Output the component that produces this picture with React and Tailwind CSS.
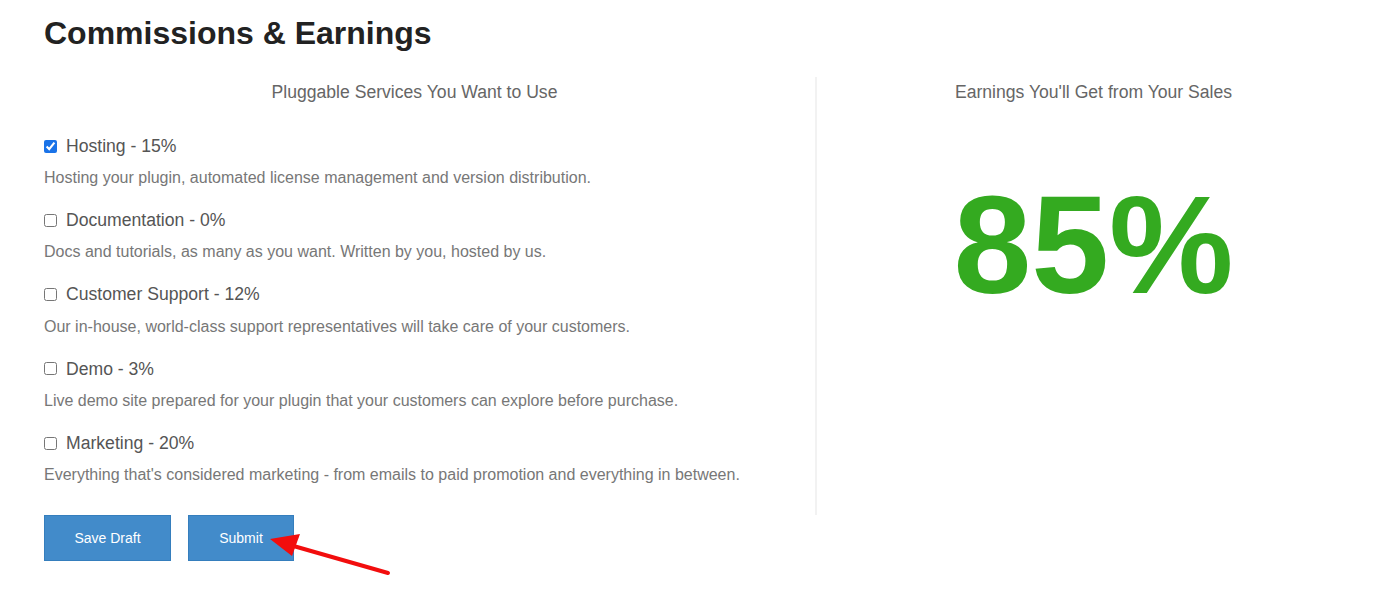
import React from 'react';

const services = [
  { name: 'Hosting - 15%', desc: 'Hosting your plugin, automated license management and version distribution.', checked: true },
  { name: 'Documentation - 0%', desc: 'Docs and tutorials, as many as you want. Written by you, hosted by us.' },
  { name: 'Customer Support - 12%', desc: 'Our in-house, world-class support representatives will take care of your customers.' },
  { name: 'Demo - 3%', desc: 'Live demo site prepared for your plugin that your customers can explore before purchase.' },
  { name: 'Marketing - 20%', desc: "Everything that's considered marketing - from emails to paid promotion and everything in between." },
];

function App() {
  return (
    <div className="relative min-h-screen bg-white font-['Liberation_Sans',Arial,sans-serif]">
      <div className="pl-[44px] pt-[16px]">
        <h1 className="text-[32px] leading-[34px] font-bold text-[#222]">Commissions &amp; Earnings</h1>

        {/* Columns */}
        <div className="mt-[27px] flex">
          <div className="w-[741px] pb-[29px]">
            <h2 className="text-center text-[17.6px] leading-[24px] text-[#666] pt-[3px]">
              Pluggable Services You Want to Use
            </h2>
            <div className="mt-[30px] flex flex-col gap-[19.3px]">
              {services.map((s) => (
                <div key={s.name}>
                  <label className="flex items-center h-[24px] text-[17.6px] text-[#555]">
                    <input
                      type="checkbox"
                      defaultChecked={s.checked}
                      className="w-[13px] h-[13px] m-0 mr-[9px] accent-[#1a73e8]"
                    />
                    {s.name}
                  </label>
                  <p className="mt-[9px] text-[16px] leading-[22px] text-[#777]">{s.desc}</p>
                </div>
              ))}
            </div>
          </div>
          <div className="w-[30px]" />
          <div className="flex-1 border-l-2 border-[#f2f2f2] pr-[4px]">
            <h2 className="text-center text-[17.6px] leading-[24px] text-[#666] pt-[3px]">
              Earnings You&apos;ll Get from Your Sales
            </h2>
            <div className="mt-[66px] text-center text-[140px] leading-[150px] font-bold text-[#34aa20]">
              85%
            </div>
          </div>
        </div>

        {/* Buttons */}
        <div className="flex gap-[17px]">
          <button className="w-[127px] h-[46px] bg-[#428bca] border border-[#357ebd] text-white text-[14px]">
            Save Draft
          </button>
          <button className="w-[106px] h-[46px] bg-[#428bca] border border-[#357ebd] text-white text-[14px]">
            Submit
          </button>
        </div>
      </div>

      {/* Annotation arrow */}
      <svg className="absolute left-[260px] top-[530px]" width="140" height="50" viewBox="0 0 140 50">
        <line x1="128" y1="43" x2="30" y2="15" stroke="#f20d0d" strokeWidth="4" strokeLinecap="round" />
        <polygon points="10,9 40,4 32,26" fill="#f20d0d" />
      </svg>
    </div>
  );
}

export default App;
